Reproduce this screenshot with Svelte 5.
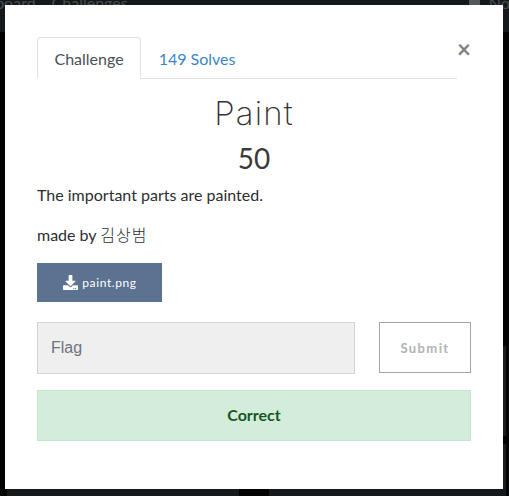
<script lang="ts">
	let flag = $state('');
</script>

<div class="page">
	<div class="navbar">
		<span class="nav-item">Scoreboard</span>
		<span class="nav-item">Challenges</span>
		<span class="nav-icon"></span>
		<span class="nav-user">Notifications</span>
	</div>
	<div class="backdrop">
		<div class="strip tall"></div>
		<div class="strip"></div>
	</div>
	<div class="floor">
		<div class="floor-panel"></div>
		<div class="floor-panel"></div>
	</div>

	<div class="modal">
		<button class="close" aria-label="Close">×</button>
		<ul class="tabs">
			<li class="tab active">Challenge</li>
			<li class="tab">149 Solves</li>
		</ul>

		<h2 class="title">Paint</h2>
		<h3 class="value">50</h3>

		<p class="desc">The important parts are painted.</p>
		<p class="desc">made by <span class="author">김상범</span></p>

		<button class="file">
			<svg viewBox="0 0 512 512" width="15" height="15" aria-hidden="true">
				<path
					fill="currentColor"
					d="M216 0h80c13.300 0 24 10.700 24 24v168h87.700c17.800 0 26.700 21.500 14.100 34.100L269.700 378.300c-7.500 7.500-19.800 7.500-27.300 0L90.100 226.100c-12.600-12.600-3.700-34.100 14.100-34.100H192V24c0-13.300 10.700-24 24-24zm296 376v112c0 13.300-10.700 24-24 24H24c-13.300 0-24-10.700-24-24V376c0-13.300 10.700-24 24-24h146.700l49 49c20.100 20.100 52.500 20.100 72.600 0l49-49H488c13.300 0 24 10.700 24 24zm-124 88c0-11-9-20-20-20s-20 9-20 20 9 20 20 20 20-9 20-20zm64 0c0-11-9-20-20-20s-20 9-20 20 9 20 20 20 20-9 20-20z"
				/>
			</svg>
			<span>paint.png</span>
		</button>

		<div class="submit-row">
			<input class="flag" placeholder="Flag" bind:value={flag} />
			<button class="submit">Submit</button>
		</div>

		<div class="notice">Correct</div>
	</div>
</div>

<style>
	:global(body) {
		margin: 0;
		background: #000;
	}

	.page {
		position: relative;
		width: 509px;
		height: 496px;
		overflow: hidden;
		background: #030303;
		font-family: Lato, 'Noto Sans CJK KR', sans-serif;
		color: #2b2f33;
		display: flex;
		flex-direction: column;
	}

	.navbar {
		height: 32px;
		flex: none;
		background: #16191c;
		color: #4a4d50;
		font-size: 16px;
		display: flex;
		gap: 16px;
		line-height: 6px;
		overflow: hidden;
		white-space: nowrap;
	}

	.nav-item:first-child {
		margin-left: -44px;
	}

	.nav-icon {
		width: 11px;
		height: 6px;
		margin-left: auto;
		background: #55585b;
	}

	.nav-user {
		margin-left: -7px;
		margin-right: -70px;
	}

	.backdrop {
		flex: 1;
		display: flex;
		flex-direction: column;
		align-items: flex-end;
		justify-content: flex-end;
		gap: 8px;
		padding-right: 3px;
	}

	.strip {
		width: 3px;
		height: 45px;
		background: #1c1c1c;
	}

	.strip.tall {
		height: 90px;
	}

	.floor {
		display: flex;
		flex: none;
		height: 7px;
		padding-left: 7px;
		padding-right: 3px;
	}

	.floor-panel {
		background: #16191c;
		width: 232px;
	}

	.floor-panel + .floor-panel {
		margin-left: 30px;
		flex: 1;
	}

	.modal {
		position: absolute;
		left: 5px;
		top: 5px;
		width: 498px;
		height: 484px;
		box-sizing: border-box;
		background: #fff;
		padding: 32px 32px 0;
	}

	.close {
		position: absolute;
		top: 32px;
		right: 32px;
		border: 0;
		padding: 0;
		background: none;
		color: #808080;
		font: 700 24px/24px Lato, sans-serif;
	}

	.tabs {
		list-style: none;
		margin: 0 14px 0 0;
		padding: 0;
		display: flex;
		border-bottom: 1px solid #dee2e6;
		height: 41px;
	}

	.tab {
		box-sizing: border-box;
		height: 42px;
		padding: 0 16.5px;
		font-size: 16px;
		line-height: 41px;
		color: #3a87c8;
		border: 1px solid transparent;
		border-radius: 4px 4px 0 0;
	}

	.tab.active {
		color: #495057;
		background: #fff;
		border-color: #dee2e6 #dee2e6 #fff;
	}

	.title {
		margin: 15px 0 0;
		text-align: center;
		font-family: Inter, sans-serif;
		font-size: 33px;
		line-height: 38px;
		font-weight: 200;
		letter-spacing: 1.1px;
		color: #333;
	}

	.value {
		margin: 9px 0 0;
		text-align: center;
		font-size: 28px;
		line-height: 34px;
		font-weight: 400;
		color: #3a3a3a;
	}

	.desc {
		margin: 0 0 16px;
		font-size: 16px;
		line-height: 24px;
	}

	.value + .desc {
		margin-top: 8px;
	}

	.author {
		letter-spacing: 1px;
		font-weight: 300;
	}

	.file {
		display: flex;
		align-items: center;
		justify-content: center;
		gap: 4px;
		width: 125px;
		height: 39px;
		padding: 0 0 0 1px;
		border: 0;
		background: #5b7290;
		color: #fff;
		font: 400 12px Lato, sans-serif;
		letter-spacing: 0.6px;
	}

	.submit-row {
		display: flex;
		justify-content: space-between;
		margin-top: 20px;
		width: 434px;
	}

	.flag {
		box-sizing: border-box;
		width: 318px;
		height: 52px;
		padding: 0 13px;
		border: 1px solid #ced4da;
		background: #efefef;
		font: 16px 'Liberation Sans', sans-serif;
	}

	.flag::placeholder {
		color: #6c757d;
		opacity: 1;
	}

	.submit {
		box-sizing: border-box;
		width: 92px;
		height: 51px;
		border: 1px solid #a3a6ab;
		background: #fff;
		color: #b0b3b8;
		font: 700 13px Lato, sans-serif;
		letter-spacing: 1.4px;
	}

	.notice {
		box-sizing: border-box;
		width: 434px;
		height: 51px;
		margin-top: 16px;
		border: 1px solid #c3e6cb;
		background: #d4edda;
		color: #155724;
		font-size: 16px;
		font-weight: 700;
		line-height: 47px;
		text-align: center;
	}
</style>
